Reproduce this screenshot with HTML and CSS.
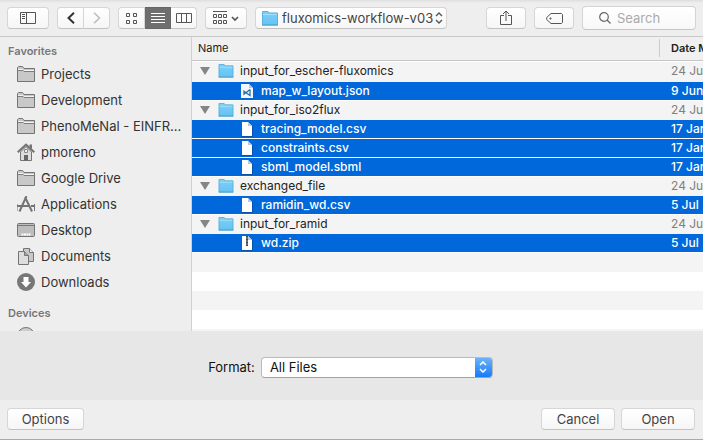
FILE: index.html
```html
<!DOCTYPE html>
<html lang="en">
<head>
<meta charset="utf-8">
<title>Open</title>
<link rel="stylesheet" href="styles.css">
</head>
<body>
<svg class="defs" aria-hidden="true">
  <defs>
    <linearGradient id="blue" x1="0" y1="0" x2="0" y2="1"><stop offset="0" stop-color="#7dd0f8"/><stop offset="1" stop-color="#64c3f3"/></linearGradient>
    <symbol id="folder" viewBox="0 0 16 15">
      <path d="M.5 14V.5H6l1 1.500h8.500V14z" fill="url(#blue)" stroke="#59b0dc"/>
      <path d="M1 3.500h14" stroke="#a4e0fb"/><path d="M0 14h16" stroke="#4da3cf"/>
    </symbol>
    <symbol id="side-folder" viewBox="0 0 18 16">
      <path d="M.5 15.500v-14l1-1h4l1.500 2h10.500v13z" fill="#c8c8c8" stroke="#747474"/>
      <path d="M1 3.500h5l1 1h10" fill="none" stroke="#f2f2f2"/><path d="M1 4.500h5l1 1h10" fill="none" stroke="#7d7d7d"/>
    </symbol>
    <symbol id="file" viewBox="0 0 12 16">
      <path d="M1 1h6l4 4v10H1z" fill="#fff"/><path d="M7 1v4h4z" fill="#b9c9dd"/><path d="M0 15.500h12M11.500 5v10" stroke="#0752aa" fill="none"/>
    </symbol>
  </defs>
</svg>

<header class="toolbar">
  <button class="btn tool" aria-label="Sidebar"><svg width="16" height="12" viewBox="0 0 16 12" fill="none" stroke="#555"><path d="M.5.500h15v11H.5zM6.500.500v11M2 2.500h3M2 4.500h3M2 6.500h3"/></svg></button>
  <div class="group">
    <button class="btn seg" aria-label="Back"><svg width="8" height="12" viewBox="0 0 8 12" fill="none" stroke="#333" stroke-width="2"><path d="M7 .7 1.500 6 7 11.300"/></svg></button>
    <button class="btn seg" aria-label="Forward"><svg width="8" height="12" viewBox="0 0 8 12" fill="none" stroke="#bbb" stroke-width="1.500"><path d="M1 .7 6.500 6 1 11.300"/></svg></button>
  </div>
  <div class="group">
    <button class="btn seg" aria-label="Icons"><svg width="11" height="11" viewBox="0 0 11 11" fill="none" stroke="#555"><path d="M.5.500h3v3h-3zM7.500.500h3v3h-3zM.5 7.500h3v3h-3zM7.500 7.500h3v3h-3z"/></svg></button>
    <button class="btn seg active" aria-label="List"><svg width="14" height="10" viewBox="0 0 14 10" stroke="#fff"><path d="M0 .5h14M0 3.500h14M0 6.500h14M0 9.500h14"/></svg></button>
    <button class="btn seg" aria-label="Columns"><svg width="16" height="10" viewBox="0 0 16 10" fill="none" stroke="#555"><path d="M.5.500h15v9H.5zM5.500.500v9M10.500.500v9"/></svg></button>
  </div>
  <button class="btn tool" aria-label="Arrange"><svg width="26" height="14" viewBox="0 0 26 14" fill="none" stroke="#555"><path d="M0 .5h14M.5 3.500h3v3h-3zM5.500 3.500h3v3h-3zM10.500 3.500h3v3h-3zM.5 9.500h3v3h-3zM5.500 9.500h3v3h-3zM10.500 9.500h3v3h-3z"/><path d="m19 6 3 3 3-3" stroke-width="1.700"/></svg></button>
  <div class="btn path">
    <svg width="16" height="15"><use href="#folder"/></svg>
    <select aria-label="Location"><option>fluxomics-workflow-v03</option></select>
    <svg width="8" height="12" viewBox="0 0 8 12" fill="none" stroke="#555" stroke-width="1.400"><path d="m1 4 3-3 3 3M1 8l3 3 3-3"/></svg>
  </div>
  <button class="btn action share" aria-label="Share"><svg width="12" height="16" viewBox="0 0 12 16" fill="none" stroke="#555"><path d="M4 5.500H.5v9h11v-9H8M6 11V1M3 4l3-3 3 3"/></svg></button>
  <button class="btn action" aria-label="Tags"><svg width="17" height="11" viewBox="0 0 17 11" fill="none" stroke="#555"><path d="M5 .5h10.500l1 1v8l-1 1H5L.7 6.500v-2z"/><circle cx="4.500" cy="5.500" r=".7"/></svg></button>
  <label class="search"><svg width="12" height="12" viewBox="0 0 12 12" fill="none" stroke="#666" stroke-width="1.200"><circle cx="5" cy="5" r="4.300"/><path d="m8 8 3.500 3.500"/></svg><input type="text" placeholder="Search" aria-label="Search"></label>
</header>

<main class="browser">
  <nav class="sidebar">
    <h2>Favorites</h2>
    <a href="#"><svg width="18" height="16"><use href="#side-folder"/></svg><span>Projects</span></a>
    <a href="#"><svg width="18" height="16"><use href="#side-folder"/></svg><span>Development</span></a>
    <a href="#"><svg width="18" height="16"><use href="#side-folder"/></svg><span>PhenoMeNal - EINFR...</span></a>
    <a href="#"><svg width="18" height="18" viewBox="0 0 18 18"><path d="M3.500 9v8.500h11V9L9 3.500z" fill="#ddd" stroke="#747474"/><path d="M12.500 1.500H15V6l-2.500-2z" fill="#747474"/><path d="M.7 9.200 9 1.700l8.300 7.500" fill="none" stroke="#747474" stroke-width="2"/><path d="M7.500 6.500h3v3h-3z" fill="#eee" stroke="#888"/><path d="M7 17.500V12h4v5.500z" fill="#666"/></svg><span>pmoreno</span></a>
    <a href="#"><svg width="18" height="16"><use href="#side-folder"/></svg><span>Google Drive</span></a>
    <a href="#"><svg width="18" height="16" viewBox="0 0 18 16" fill="none" stroke="#747474"><path d="M9.500 0 2.500 15.500M8 1l7 14.500" stroke-width="2"/><path d="M0 10h12M14 10h4" stroke-width="2"/><path d="M0 15V8M17.500 8v7"/></svg><span>Applications</span></a>
    <a href="#"><svg width="18" height="14" viewBox="0 0 18 14"><rect x=".5" y=".5" width="17" height="13" rx="1" fill="#bdbdbd" stroke="#747474"/><path d="M1 2.500h16" stroke="#777"/><path d="M4.500 11.500h9" stroke="#fff" stroke-width="2" stroke-dasharray="2 .5"/></svg><span>Desktop</span></a>
    <a href="#"><svg width="18" height="18" viewBox="0 0 18 18" stroke="#747474"><path d="M6.500 14.500V1.500h6l4 4v9z" fill="#c8c8c8"/><path d="M12.500 1.500v4h4" fill="#eee"/><path d="M1.500 17.500v-13h6l4 4v9z" fill="#ddd"/><path d="M7.500 4.500v4h4" fill="#aaa"/></svg><span>Documents</span></a>
    <a href="#"><svg width="18" height="18" viewBox="0 0 18 18"><circle cx="9" cy="9" r="9" fill="#777"/><path d="M6.500 4h5v5H14l-5 5.500L4 9h2.500z" fill="#fff"/></svg><span>Downloads</span></a>
    <h2 class="next">Devices</h2>
    <a href="#" aria-label="Disc"><svg width="18" height="20" viewBox="0 0 18 20"><circle cx="9" cy="10" r="8.500" fill="#ccc" stroke="#747474"/></svg></a>
  </nav>
  <section class="files">
    <table>
      <thead><tr><th>Name</th><th class="date"><span>Date Modified</span></th></tr></thead>
      <tbody>
        <tr class="gap"><td colspan="2"></td></tr>
        <tr><td><div class="cell"><i class="tri"></i><svg width="16" height="14"><use href="#folder"/></svg>input_for_escher-fluxomics</div></td><td>24 Jun</td></tr>
        <tr class="sel"><td><div class="cell leaf"><svg width="12" height="16" viewBox="0 0 12 16"><path d="M0 1h8l4 4v10H0z" fill="#f4f6f8"/><path d="M8 1v4h4z" fill="#b9c9dd"/><path d="M9 6.500v6L3 8.200v3L9 6.500" fill="none" stroke="#2472ae" stroke-width="1.300"/></svg>map_w_layout.json</div></td><td>9 Jun</td></tr>
        <tr><td><div class="cell"><i class="tri"></i><svg width="16" height="14"><use href="#folder"/></svg>input_for_iso2flux</div></td><td>24 Jun</td></tr>
        <tr class="sel"><td><div class="cell leaf"><svg width="12" height="16"><use href="#file"/></svg>tracing_model.csv</div></td><td>17 Jan</td></tr>
        <tr class="sel"><td><div class="cell leaf"><svg width="12" height="16"><use href="#file"/></svg>constraints.csv</div></td><td>17 Jan</td></tr>
        <tr class="sel"><td><div class="cell leaf"><svg width="12" height="16"><use href="#file"/></svg>sbml_model.sbml</div></td><td>17 Jan</td></tr>
        <tr><td><div class="cell"><i class="tri"></i><svg width="16" height="14"><use href="#folder"/></svg>exchanged_file</div></td><td>24 Jun</td></tr>
        <tr class="sel"><td><div class="cell leaf"><svg width="12" height="16"><use href="#file"/></svg>ramidin_wd.csv</div></td><td>5 Jul</td></tr>
        <tr><td><div class="cell"><i class="tri"></i><svg width="16" height="14"><use href="#folder"/></svg>input_for_ramid</div></td><td>24 Jun</td></tr>
        <tr class="sel"><td><div class="cell leaf"><svg width="12" height="16" viewBox="0 0 12 16"><use href="#file"/><path d="M6 1v10" stroke="#444" stroke-width="2"/><path d="M5 3h2M5 6h2M5 9h2" stroke="#999"/></svg>wd.zip</div></td><td>5 Jul</td></tr>
      </tbody>
    </table>
    <div class="empty"></div>
  </section>
</main>

<section class="format">
  <label for="format">Format:</label>
  <div class="popup">
    <select id="format"><option>All Files</option></select>
    <span class="knob"><svg width="8" height="12" viewBox="0 0 8 12" fill="none" stroke="#fff" stroke-width="1.600"><path d="m1 4 3-3 3 3M1 8l3 3 3-3"/></svg></span>
  </div>
</section>

<footer class="actions">
  <button class="btn push options">Options</button>
  <button class="btn push">Cancel</button>
  <button class="btn push">Open</button>
</footer>
</body>
</html>
```
FILE: styles.css
```css
* { box-sizing: border-box; }

body {
  margin: 0;
  height: 100vh;
  display: flex;
  flex-direction: column;
  overflow: hidden;
  background: #eee;
  color: #222;
  font: 13px/18px Inter, "Liberation Sans", sans-serif;
}

button, input, select { font: inherit; color: inherit; margin: 0; padding: 0; }
svg { display: block; flex: none; }
.defs { position: absolute; width: 0; height: 0; }

.toolbar {
  display: flex;
  align-items: center;
  gap: 8px;
  height: 37px;
  flex: none;
  padding: 0 7px;
  border-bottom: 1px solid #c8c8c8;
  background: linear-gradient(#dedede, #eee 3px);
}

.btn {
  display: flex;
  align-items: center;
  justify-content: center;
  height: 22px;
  border: 1px solid #d6d6d6;
  border-bottom-color: #c2c2c2;
  border-radius: 4px;
  background: linear-gradient(#fff, #f6f6f6);
  color: #444;
}

.tool { width: 42px; }
.group { display: flex; }
.seg { width: 27px; }
.seg + .seg { border-left: 0; width: 26px; }
.seg:not(:last-child) { border-top-right-radius: 0; border-bottom-right-radius: 0; }
.seg:not(:first-child) { border-top-left-radius: 0; border-bottom-left-radius: 0; }
.seg.active { background: #6e6e6e; border-color: #666; }

select {
  appearance: none;
  flex: 1;
  min-width: 0;
  border: 0;
  background: none;
}

.path { width: 192px; padding: 0 3px 0 6px; }
.path select { padding-left: 4px; }

.action { width: 40px; }
.share { margin-left: auto; }

.search {
  display: flex;
  align-items: center;
  gap: 6px;
  width: 114px;
  height: 24px;
  padding-left: 16px;
  border: 1px solid #d4d4d4;
  border-bottom-color: #c6c6c6;
  border-radius: 4px;
  background: linear-gradient(#fff, #f8f8f8);
}
.search input { width: 100%; min-width: 0; border: 0; background: none; }
.search input::placeholder { color: #aaa; }

.browser { display: flex; flex: 1; min-height: 0; }

.sidebar {
  width: 192px;
  flex: none;
  padding-top: 5px;
  overflow: hidden;
  border-right: 1px solid #d0d0d0;
}
.sidebar h2 {
  margin: 0;
  padding-left: 8px;
  font-size: 11px;
  font-weight: 600;
  line-height: 19px;
  color: #777;
}
.sidebar .next { margin-top: 9px; }
.sidebar a {
  display: flex;
  align-items: center;
  gap: 6px;
  height: 26px;
  padding-left: 17px;
  color: #333;
  text-decoration: none;
  white-space: nowrap;
}

.files {
  flex: 1;
  min-width: 0;
  overflow: hidden;
  display: flex;
  flex-direction: column;
  background: #fff;
}

table {
  width: calc(100% + 80px);
  flex: none;
  table-layout: fixed;
  border-collapse: collapse;
  font-size: 12px;
}
th, td { padding: 0; text-align: left; white-space: nowrap; font-weight: 400; }
th {
  height: 23px;
  padding-left: 6px;
  font-size: 11px;
  background: #f0f0f0;
  border-bottom: 1px solid #c4c4c4;
}
th.date { width: 124px; padding: 0; font-weight: 600; }
th span { display: block; padding-left: 11px; border-left: 1px solid #ccc; }
.gap td { height: 2px; background: #fff; }
tbody tr { background: #f4f4f4; }
td { height: 19px; line-height: 18px; border-bottom: 1px solid #f4f4f4; }
.gap td { border: 0; }
td:last-child { padding-left: 12px; color: #808080; }
.sel { background: #0068da; color: #fff; }
.sel td { font-weight: 500; border-bottom-color: #fff; }
.sel td:last-child { color: #fff; }

.cell { display: flex; align-items: center; gap: 6px; height: 18px; padding-left: 8px; }
.leaf { gap: 8px; padding-left: 49px; }
.tri {
  width: 10px;
  margin-right: 2px;
  border: 5px solid transparent;
  border-top: 8px solid #858585;
  border-bottom: 0;
}

.empty {
  flex: 1;
  background: repeating-linear-gradient(#f4f4f4 0 19px, #fff 19px 38px);
}

.format {
  display: flex;
  align-items: center;
  justify-content: center;
  gap: 6px;
  flex: none;
  height: 69px;
  padding: 3px 2px 0 0;
  background: #e7e7e7;
  color: #111;
}
.popup {
  display: flex;
  width: 232px;
  height: 21px;
  border: 1px solid #bbb;
  border-bottom-color: #a2a2a2;
  border-radius: 4px;
  overflow: hidden;
  background: #fff;
}
.popup select { padding-left: 8px; }
.knob {
  display: flex;
  align-items: center;
  justify-content: center;
  width: 17px;
  background: linear-gradient(#6cb2fa, #147bfb);
}

.actions {
  display: flex;
  gap: 6px;
  flex: none;
  height: 40px;
  padding: 8px 8px 0 7px;
  border-bottom: 1px solid #aaa;
}
.push { width: 74px; }
.options { width: 77px; margin-right: auto; }
```
